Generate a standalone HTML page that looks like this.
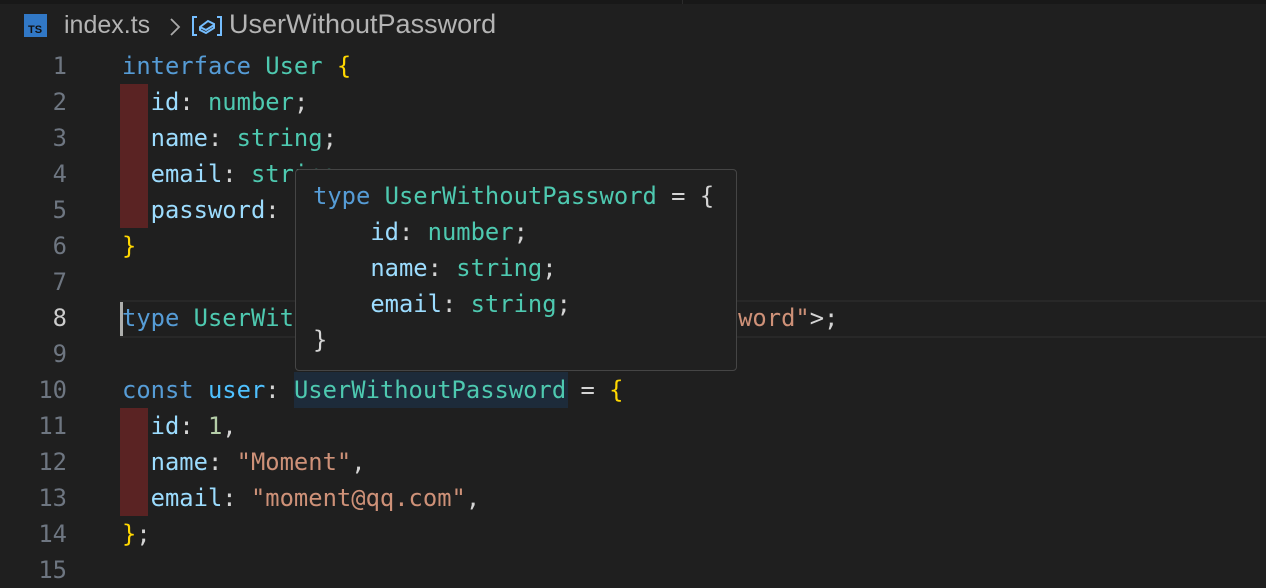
<!DOCTYPE html>
<html><head><meta charset="utf-8"><style>
body{margin:0;width:1266px;height:588px;background:#1f1f1f;overflow:hidden;position:relative;font-family:"DejaVu Sans Mono",monospace;}
.top{position:absolute;left:0;top:0;width:1266px;height:4px;background:#181818;}
.tabline{position:absolute;top:0;height:4px;width:1px;background:#2b2b2b}
.bct{position:absolute;top:11px;font-family:"Liberation Sans",sans-serif;font-size:25px;color:#b4b4b4;white-space:pre;}
.ts{position:absolute;left:24px;top:14px;width:23px;height:23px;background:#3178c6;}
.ts span{position:absolute;left:4px;bottom:1px;color:#111;font:bold 11px "Liberation Sans",sans-serif;}
.ln{position:absolute;left:0;width:67px;text-align:right;color:#6e7681;font-size:23.8px;line-height:36px;}
.code{position:absolute;left:122px;font-size:23.8px;line-height:36px;white-space:pre;color:#d4d4d4;}
.k{color:#569cd6}.t{color:#4ec9b0}.p{color:#9cdcfe}.b{color:#ffd700}.s{color:#ce9178}.n{color:#b5cea8}.v{color:#4fc1ff}
.red{position:absolute;left:120px;width:28px;background:#5a2323;}
.tip{position:absolute;left:295px;top:169px;width:440px;height:200px;background:#202020;border:1px solid #454545;border-radius:4px;}
</style></head><body>
<div class="top"></div><div class="tabline" style="left:682px"></div><div class="tabline" style="left:1400px"></div>
<div class="ts"><span>TS</span></div>
<div class="bct" style="left:64px">index.ts</div>
<svg style="position:absolute;left:168px;top:16px" width="14" height="22" viewBox="0 0 14 22"><path d="M3 3 L11 11 L3 19" fill="none" stroke="#aaa" stroke-width="1.8"/></svg>
<svg style="position:absolute;left:191px;top:14px" width="32" height="24" viewBox="0 0 32 24"><g fill="none" stroke="#75beff" stroke-width="2"><path d="M6 3H2V21H6M26 3H30V21H26"/><path d="M9 13L17 7L23 10L23 14L15 19L9 16Z M9 13L15 16L23 11"/></g></svg>
<div class="bct" style="left:229px;font-size:27px;top:9px">UserWithoutPassword</div>
<div style="position:absolute;left:120px;top:300px;width:1146px;height:34px;border-top:2px solid #282828;border-bottom:2px solid #282828"></div>
<div style="position:absolute;left:120px;top:302px;width:3px;height:34px;background:#aeafad"></div>
<div style="position:absolute;left:294px;top:372px;width:274px;height:36px;background:#1d2b3a"></div>
<div class="red" style="top:84px;height:144px"></div>
<div class="red" style="top:408px;height:108px"></div>
<div class="ln" style="top:48px">1<br>2<br>3<br>4<br>5<br>6<br>7<br><span style="color:#ccc">8</span><br>9<br>10<br>11<br>12<br>13<br>14<br>15</div>
<div class="code" style="top:48px"><span class="k">interface</span> <span class="t">User</span> <span class="b">{</span>
  <span class="p">id</span>: <span class="t">number</span>;
  <span class="p">name</span>: <span class="t">string</span>;
  <span class="p">email</span>: <span class="t">string</span>;
  <span class="p">password</span>: <span class="t">string</span>;
<span class="b">}</span>

<span class="k">type</span> <span class="t">UserWithoutPassword</span> = <span class="t">Omit</span>&lt;<span class="t">User</span>, <span class="s">"password"</span>&gt;;

<span class="k">const</span> <span class="v">user</span>: <span class="t">UserWithoutPassword</span> = <span class="b">{</span>
  <span class="p">id</span>: <span class="n">1</span>,
  <span class="p">name</span>: <span class="s">"Moment"</span>,
  <span class="p">email</span>: <span class="s">"moment@qq.com"</span>,
<span class="b">}</span>;
</div>
<div class="tip"><div class="code" style="left:17px;top:8px"><span class="k">type</span> <span class="t">UserWithoutPassword</span> = {
    <span class="p">id</span>: <span class="t">number</span>;
    <span class="p">name</span>: <span class="t">string</span>;
    <span class="p">email</span>: <span class="t">string</span>;
}</div></div>
</body></html>
